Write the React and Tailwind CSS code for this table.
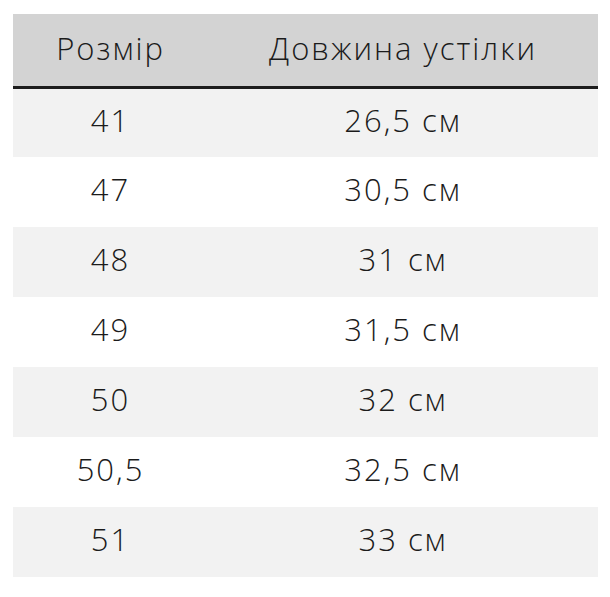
import React from 'react';

const rows = [
  ['41', '26,5 см'],
  ['47', '30,5 см'],
  ['48', '31 см'],
  ['49', '31,5 см'],
  ['50', '32 см'],
  ['50,5', '32,5 см'],
  ['51', '33 см'],
];

export default function App() {
  return (
    <div className="min-h-[597px] w-[610px] bg-white pt-[14px] pl-[13px] font-['Open_Sans',sans-serif] text-[#1b1b1b]">
      <table className="w-[585px] border-collapse text-[31px] font-light tracking-[2px]">
        <thead>
          <tr className="h-[73px] bg-[#d3d3d3] border-b-[3px] border-[#1c1c1c]">
            <th className="w-[195px] p-0 pb-[3px] text-center font-light">Розмір</th>
            <th className="p-0 pb-[3px] text-center font-light">Довжина устілки</th>
          </tr>
        </thead>
        <tbody>
          {rows.map(([size, length], i) => (
            <tr key={size} className={`h-[70px] ${i % 2 === 0 ? 'bg-[#f2f2f2]' : 'bg-white'}`}>
              <td className="p-0 pb-[5px] text-center">{size}</td>
              <td className="p-0 pb-[5px] text-center">{length}</td>
            </tr>
          ))}
        </tbody>
      </table>
    </div>
  );
}
